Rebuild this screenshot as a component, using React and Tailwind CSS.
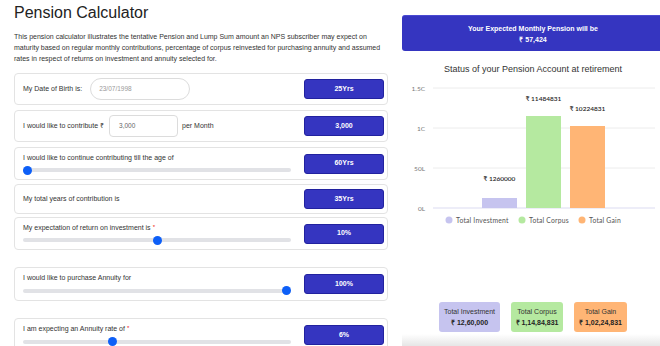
import React from "react";

const font = { fontFamily: '"Liberation Sans", Arial, sans-serif' };

function ValueBox({ children }) {
  return (
    <div className="w-[80px] h-[20px] shrink-0 flex items-center justify-center rounded-[3px] border border-[#22229f] bg-[#3535c0] text-white text-[7px] font-bold">
      {children}
    </div>
  );
}

function Slider({ pct }) {
  return (
    <div className="relative w-[268px] h-[9px] flex items-center">
      <div className="w-full h-[4px] rounded-full bg-[#e1e2e6]" />
      <div
        className="absolute top-0 w-[9px] h-[9px] rounded-full bg-[#0d5ff7]"
        style={{ left: `${pct * 259}px` }}
      />
    </div>
  );
}

function Req() {
  return <span className="text-[#e11] align-top text-[6px] ml-[2px]">*</span>;
}

function SliderCard({ label, value, pct, h, mt }) {
  return (
    <div className={`flex items-center justify-between border border-[#e3e3e3] rounded-[4px] pl-[8px] pr-[3px] ${h} ${mt}`}>
      <div className="flex flex-col gap-[4px]">
        <div className="text-[7px] leading-[9px] text-[#333]">{label}</div>
        <Slider pct={pct} />
      </div>
      <ValueBox>{value}</ValueBox>
    </div>
  );
}

function Chart() {
  const grid = [
    { y: 10, t: "1.5C" },
    { y: 50, t: "1C" },
    { y: 90, t: "50L" },
  ];
  return (
    <svg width="262" height="150" viewBox="0 0 262 150" className="mt-[3px]">
      {grid.map((g) => (
        <g key={g.t}>
          <line x1="31" x2="253" y1={g.y} y2={g.y} stroke="#ececec" strokeWidth="1" />
          <text x="23" y={g.y + 2.5} textAnchor="end" fontSize="6.5" fill="#777" fontFamily="Lato, sans-serif">{g.t}</text>
        </g>
      ))}
      <line x1="31" x2="253" y1="130" y2="130" stroke="#dcdcf2" strokeWidth="1.2" />
      <text x="23" y="132.5" textAnchor="end" fontSize="6.5" fill="#777" fontFamily="Lato, sans-serif">0L</text>

      <rect x="80" y="120" width="35" height="10" fill="#c6c4ef" />
      <rect x="124" y="38" width="35" height="92" fill="#b5e9a0" />
      <rect x="168" y="48" width="35" height="82" fill="#ffb575" />

      <g fontSize="6.5" fill="#222" fontFamily="Lato, sans-serif" textAnchor="middle" fontWeight="600">
        <text x="97.5" y="103">₹ 1260000</text>
        <text x="141.5" y="23">₹ 11484831</text>
        <text x="185.5" y="33">₹ 10224831</text>
      </g>

      <g fontSize="6.8" fill="#555" fontFamily="Lato, sans-serif" letterSpacing="0.2">
        <circle cx="47" cy="142" r="3.5" fill="#c6c4ef" />
        <text x="54" y="144.5">Total Investment</text>
        <circle cx="120" cy="142" r="3.5" fill="#b5e9a0" />
        <text x="127" y="144.5">Total Corpus</text>
        <circle cx="180" cy="142" r="3.5" fill="#ffb575" />
        <text x="187" y="144.5">Total Gain</text>
      </g>
    </svg>
  );
}

function Summary({ title, value, bg, w }) {
  return (
    <div className={`${bg} ${w} h-[30px] rounded-[3px] flex flex-col items-center justify-center text-[7px] leading-[11px] text-[#333]`}>
      <div>{title}</div>
      <div className="font-bold text-[#222]">{value}</div>
    </div>
  );
}

export default function App() {
  return (
    <div className="w-[660px] h-[346px] overflow-hidden bg-white flex" style={font}>
      {/* left side: inputs */}
      <div className="w-[374px] ml-[14px] shrink-0">
        <h1 className="text-[16px] leading-[20px] text-[#222] mt-[3px]">Pension Calculator</h1>
        <p className="text-[7px] leading-[11px] text-[#333] mt-[8px] pr-[4px]">
          This pension calculator illustrates the tentative Pension and Lump Sum amount an NPS subscriber may expect on
          maturity based on regular monthly contributions, percentage of corpus reinvested for purchasing annuity and assumed
          rates in respect of returns on investment and annuity selected for.
        </p>

        <div className="flex flex-col mt-[9px]">
          <div className="flex items-center justify-between border border-[#e3e3e3] rounded-[4px] pl-[8px] pr-[3px] h-[32px]">
            <div className="flex items-center gap-[8px]">
              <span className="text-[7px] text-[#333]">My Date of Birth is:</span>
              <div className="w-[100px] h-[22px] rounded-full border border-[#dcdcdc] flex items-center pl-[8px] text-[6.5px] text-[#999]">
                23/07/1998
              </div>
            </div>
            <ValueBox>25Yrs</ValueBox>
          </div>

          <div className="flex items-center justify-between border border-[#e3e3e3] rounded-[4px] pl-[8px] pr-[3px] h-[32px] mt-[5px]">
            <div className="flex items-center">
              <span className="text-[7px] text-[#333]">I would like to contribute ₹</span>
              <div className="w-[69px] h-[22px] ml-[5px] rounded-[4px] border border-[#dcdcdc] flex items-center pl-[9px] text-[6.5px] text-[#666]">
                3,000
              </div>
              <span className="text-[7px] text-[#333] ml-[4px]">per Month</span>
            </div>
            <ValueBox>3,000</ValueBox>
          </div>

          <SliderCard
            label="I would like to continue contributing till the age of"
            value="60Yrs"
            pct={0}
            h="h-[33px]"
            mt="mt-[5px]"
          />

          <div className="flex items-center justify-between border border-[#e3e3e3] rounded-[4px] pl-[8px] pr-[3px] h-[30px] mt-[4px]">
            <span className="text-[7px] text-[#333]">My total years of contribution is</span>
            <ValueBox>35Yrs</ValueBox>
          </div>

          <SliderCard
            label={<>My expectation of return on investment is<Req /></>}
            value="10%"
            pct={0.5}
            h="h-[33px]"
            mt="mt-[3px]"
          />

          <SliderCard
            label="I would like to purchase Annuity for"
            value="100%"
            pct={1}
            h="h-[34px]"
            mt="mt-[17px]"
          />

          <SliderCard
            label={<>I am expecting an Annuity rate of<Req /></>}
            value="6%"
            pct={0.33}
            h="h-[34px]"
            mt="mt-[17px]"
          />
        </div>
      </div>

      {/* right side: result */}
      <div className="w-[262px] ml-[14px] shrink-0 flex flex-col">
        <div className="mt-[15px] h-[36px] rounded-[3px] bg-[#3535c0] border-t border-[#4a4ad2] flex flex-col items-center justify-center text-white text-[7px] font-bold leading-[11px]">
          <div>Your Expected Monthly Pension will be</div>
          <div>₹ 57,424</div>
        </div>

        <div className="mt-[12px] text-center text-[9px] leading-[12px] text-[#333]">
          Status of your Pension Account at retirement
        </div>

        <Chart />

        <div className="mt-[74px] flex justify-center gap-[11px]">
          <Summary title="Total Investment" value="₹ 12,60,000" bg="bg-[#c6c4ef]" w="w-[61px]" />
          <Summary title="Total Corpus" value="₹ 1,14,84,831" bg="bg-[#b5e9a0]" w="w-[52px]" />
          <Summary title="Total Gain" value="₹ 1,02,24,831" bg="bg-[#ffb575]" w="w-[53px]" />
        </div>

        <div className="mt-[2px] h-[12px] bg-gradient-to-b from-white to-[#e6e6e6]" />
      </div>
    </div>
  );
}
